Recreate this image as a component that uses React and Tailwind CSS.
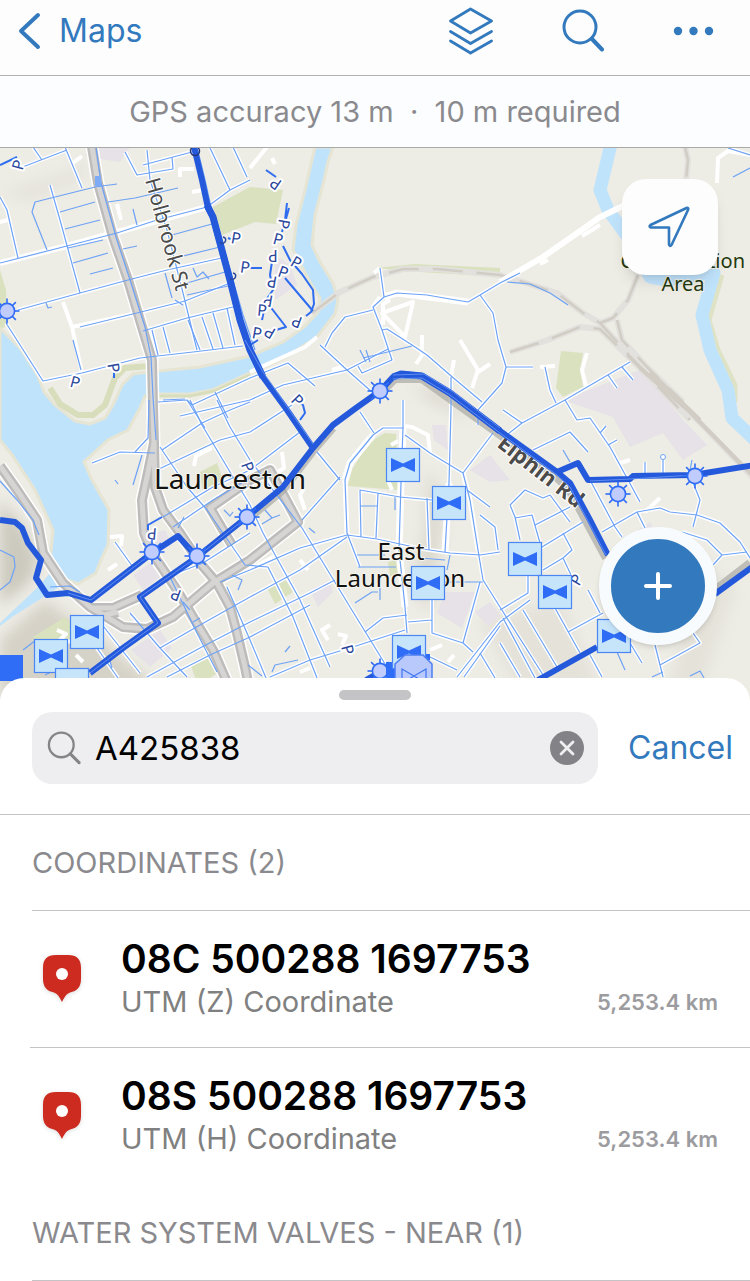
import { useState } from "react";

const water =
  "M0 328 L20 348 L38 376 L44 392 L55 405 L75 421 L90 424 L105 418 L113 405 L122 385 L133 374 L148 372 L200 367 L250 356 L283 342 L305 326 L318 312 L320 298 L311 284 L293 250 L296 225 L305 190 L315 147 L333 147 L328 162 L324 180 L315 215 L312 245 L320 262 L333 283 L338 300 L335 314 L317 337 L283 359 L250 373 L212 390 L190 394 L160 394 L145 396 L140 408 L128 430 L108 440 L84 462 L92 480 L109 510 L108 545 L100 562 L96 573 L78 584 L62 578 L50 562 L53 530 L35 490 L12 455 L0 440 Z";

const riverRight =
  "M612 140 L600 190 L608 210 L630 240 L650 277 L666 280 L700 274 L714 273 L702 315 L710 350 L728 390 L732 418 L755 440";

const parks = [
  "213,207 250,187 283,190 276,224 255,222 222,235",
  "561,351 583,353 580,370 583,387 563,397 556,388",
  "376,438 385,433 396,434 398,490 348,486 352,470 365,448",
  "267,588 285,579 293,592 275,604",
  "190,663 210,652 222,670 207,680 196,680",
  "200,472 217,463 223,480 203,493",
  "33,637 65,617 85,640 40,650",
  "376,268 415,264 500,268 500,277 420,272",
  "388,562 396,560 398,575 390,576",
];

const zones = [
  "563,400 640,370 667,400 683,420 707,445 683,460 663,433 630,447 613,417",
  "445,592 475,592 462,628 437,613",
  "133,575 150,563 160,577 143,590",
  "131,650 160,630 172,648 150,667",
  "150,535 165,530 172,545 158,552",
  "275,255 290,265 297,285 275,300",
  "470,470 490,455 510,480 490,482",
  "475,612 490,602 500,615 488,626",
  "432,425 446,425 448,450 434,440",
  "310,590 330,580 333,592 318,607",
  "90,147 130,147 120,162 95,158",
  "638,530 650,522 654,530 644,540",
];

const highways = [
  "M92 147 L98 183 L113 237 L128 280 L142 327 L152 360 L153 407 L154 443 L147 477 L142 500 L144 533 L152 553 L177 590 L193 617 L213 650 L227 682",
  "M154 443 L155 487 L163 510 L180 533 L200 563 L217 583 L230 607 L237 633 L245 667 L248 682",
  "M0 466 L17 490 L37 520 L43 553 L63 583 L90 607 L123 627 L147 629 L173 617 L213 583 L250 560 L298 522 L270 470 L250 480 L210 508 L232 545",
  "M93 608 L113 608 L142 595 M104 615 L118 612",
];

const rails = [
  "M312 313 L340 292 L373 277 L403 269 L437 269 L500 275 L523 282 L557 293 L583 313 L600 323 L627 353 L653 380 L687 410 L707 430 L755 480",
  "M510 352 L545 341 L580 327 L600 329 L640 368 L690 420",
  "M685 147 L688 160 L686 180 M638 275 L628 300 L613 318 L600 323 M617 320 L622 340 L647 367 L683 402",
];

const plainRoads = [
  "M500 282 L543 257 L600 217 L625 205 M540 264 L548 260 M582 236 L600 225",
  "M717 183 L718 158 L728 151 L750 155",
  "M382 313 L413 302 L405 337 Z M372 308 L380 297 M380 268 L374 273",
  "M460 340 L478 370 L472 388 M478 372 L490 364 M422 335 L422 355 L416 364 M454 360 L451 376",
  "M72 327 L137 313 M63 302 L72 327 L82 373",
  "M73 163 L82 156 M117 204 L121 220 M180 177 L180 169 L194 169 M192 192 L203 190",
  "M587 353 L582 370 L586 386 M540 367 L555 366",
  "M0 222 L8 220 M267 147 L250 168 M272 158 L275 164",
  "M317 337 L305 347 L250 372 M332 370 L345 366",
  "M430 453 L428 435 L412 427 L403 426 M391 445 L398 441",
  "M194 466 L196 456 L212 448 M110 537 L122 536 L121 546 M108 570 L117 564",
  "M390 300 L383 304 L383 325 M282 452 L284 468 L278 472",
  "M500 610 L528 593 M258 565 L275 556 M300 560 L308 570 M338 634 L346 636 L342 645",
  "M430 650 L442 645 M448 662 L454 655 M57 630 L66 634 L60 640 L72 642 M76 655 L83 662",
  "M330 625 L322 630 L328 640 M310 668 L300 672 M620 463 L630 460 M645 512 L660 498",
  "M392 490 L388 480 M305 510 L300 495 L304 488 M230 490 L222 500",
];

const pipedRoads = [
  "M0 263 L67 246 L117 233 L157 220 L207 207 L230 190 L250 180",
  "M18 310 L80 293 L128 280 L167 270 L222 258",
  "M80 327 L137 313 L185 301 L230 283",
  "M143 331 L187 318 L233 307",
  "M6 323 L43 381 L82 373 L140 358 L193 352 L243 346",
  "M50 185 L60 220 L80 293",
  "M0 197 L7 210 L18 258",
  "M147 150 L150 180 L167 230 L183 293 L197 350",
  "M152 330 L158 355 M163 327 L170 353 M188 320 L200 350 M202 317 L213 349 M213 313 L223 348 M227 308 L235 345",
  "M20 168 L67 150 M65 147 L82 188 M33 147 L42 160",
  "M210 148 L230 190 M233 147 L247 177",
  "M125 152 L137 175 L173 169 L172 157 M143 165 L192 152",
  "M158 402 L187 400 L192 405 L250 378 L288 363 L315 386",
  "M187 400 L205 428 M215 392 L228 418",
  "M180 416 L250 400 L283 385 L347 370 L388 349",
  "M320 345 L347 370 L372 392",
  "M325 347 L332 333 L345 317 L373 310",
  "M380 268 L384 297 L373 307 L382 330 L392 360 L362 373 L358 366",
  "M384 297 L397 293 L427 295 L450 299 L468 302 L480 295 L500 283 L520 273",
  "M480 295 L493 313 L498 340 L506 367 L502 383 L478 410 L478 425",
  "M382 330 L387 329 L412 345 L427 355 L450 375 L482 402",
  "M451 377 L451 410 L449 483 L445 552",
  "M506 367 L533 367 M545 367 L550 390 L556 403",
  "M503 438 L522 423 L565 400 L630 362",
  "M608 375 L617 388 M622 367 L633 380 M503 410 L522 423",
  "M92 463 L120 452 L155 453 M149 400 L148 438 L135 452",
  "M162 450 L202 423 L230 410 L250 402",
  "M190 400 L202 425 L233 477 L250 505 L263 533 L300 600 L330 667",
  "M217 400 L230 427 L250 460 L302 528 L350 607 L390 672",
  "M160 447 L187 487 L207 510 L245 565 L268 567 L293 617 L317 678",
  "M157 470 L220 440 L250 432 L292 405",
  "M163 517 L213 487 L250 470 L300 432",
  "M173 527 L213 500 L250 478",
  "M167 577 L203 563 L250 533",
  "M220 582 L250 570 L300 548 L347 535",
  "M160 648 L200 625 L250 597 L300 570 L347 537",
  "M147 677 L200 648 L250 622 L310 593 L335 580",
  "M167 677 L210 655 L250 637 L310 605",
  "M270 677 L310 660 L353 647 L405 630",
  "M170 577 L197 633 L217 672 M115 542 L135 570 M130 613 L160 648 L187 677 M100 622 L140 673 M90 638 L118 678",
  "M227 587 L250 640 L266 678",
  "M403 400 L403 428 L383 428 L373 435 L350 463 L345 480 L347 533 L360 567",
  "M302 520 L340 477 M317 452 L340 480 M360 412 L374 433",
  "M360 490 L400 497 L432 500 M360 490 L361 537 M378 493 L376 538 M427 498 L429 550",
  "M347 535 L377 539 L423 549 L450 553 L480 555 L500 552",
  "M403 428 L401 483 L399 550 L405 607 L407 633",
  "M405 435 L430 453 L463 473 L470 500 L478 550 L483 580 L500 607 L545 678",
  "M463 473 L493 433 M467 490 L490 507 M480 515 L495 527 L498 550",
  "M480 582 L463 643 M432 600 L432 633 L463 643 L473 652 M408 622 L432 620",
  "M500 622 L457 677 M500 626 L464 677",
  "M365 632 L383 618 L407 615 M428 656 L457 670 M480 653 L495 678",
  "M533 450 L570 432 L588 452 M565 400 L577 420 L590 418 L610 447 L627 478 L640 502",
  "M590 480 L615 527 L622 537 M602 532 L637 512 L660 508 L670 512 L697 515 L720 523 L740 542 L750 558",
  "M682 532 L707 540 L722 555 L747 552 M713 565 L722 555 M688 470 L700 500 L693 527 M637 512 L645 528",
  "M510 505 L525 490 L543 498 L550 495 L570 522 M510 505 L515 517 L520 540 M515 518 L532 515 L540 543",
  "M535 525 L570 507 M537 550 L583 522 M563 533 L572 550 L563 558 L543 570 M563 558 L572 577",
  "M500 610 L528 593 L528 575 M530 600 L500 622 M503 618 L535 678 M523 610 L557 667 M555 608 L580 653",
  "M568 632 L603 613 M588 590 L600 613 M590 655 L602 677 M630 643 L642 663",
  "M655 645 L663 677 M660 665 L700 643 L693 633 M500 643 L520 677",
  "M645 462 L645 475 M663 460 L663 475 M600 433 L606 426 M608 445 L617 440",
  "M728 148 L750 155",
];

const barePipes = [
  "M55 197 L95 187 L117 184 M60 212 L95 202 M65 229 L100 220 M68 248 L103 240 M73 263 L108 253 M90 274 L113 268",
  "M47 250 L32 212 L35 202 L55 197 M108 202 L135 198 L178 188 M133 209 L137 225 M123 249 L137 246",
  "M96 147 L101 183 L116 237 L130 280 L145 327 L151 357 L153 397 L156 440",
  "M172 235 L212 224 M175 258 L220 247 M187 283 L225 272 M187 295 L228 286 M165 273 L172 298 M175 300 L183 305",
  "M73 340 L81 370 M193 268 L197 277 L203 272 L209 279 M46 303 L48 308 L52 307",
  "M197 147 L205 180 L211 207 L217 225 L230 270 L243 315 L255 350",
  "M507 282 L530 284 L550 293 L568 305 M733 177 L750 168",
  "M363 358 L412 346 M360 350 L366 362 M366 350 L370 362",
  "M142 455 L133 485 M0 481 L17 500 L33 520 L39 535 M115 480 L118 484",
  "M163 400 L185 399 M184 517 L178 528 M224 510 L230 516 L233 512",
  "M232 575 L242 580 L238 590 M183 602 L190 610 M193 622 L200 618",
  "M265 510 L272 518 L262 524 M272 518 L280 515 M309 528 L315 533",
  "M360 506 L378 506 M395 497 L395 510 M357 555 L385 555 M358 567 L396 567 M380 585 L380 600 M355 603 L372 592 L378 592",
  "M443 582 L483 582 M445 560 L420 558 M450 555 L447 570",
  "M272 672 L275 665 L298 660 M248 665 L262 676 M285 652 L290 646",
  "M23 650 L36 640 L43 645 M45 675 L60 668 M108 655 L112 668",
  "M563 450 L570 462 M692 460 L690 470 M613 643 L625 670 M652 677 L663 672 M690 676 L700 671 L704 678",
  "M0 550 L14 557 L15 567 L10 582 L0 590 M50 587 L70 586 L80 592",
];

const serviceLines = [
  "M0 165 L17 157",
  "M276 177 L266 170",
  "M287 203 L285 220 L282 232 M289 208 L284 226",
  "M283 246 L290 260 L302 274 L313 290 L314 304 L311 312 L306 316",
  "M285 278 L313 311 M273 255 L270 275 L273 290 L266 300 L262 320",
  "M269 305 L286 327 L276 330 M258 340 L250 345",
  "M228 238 L236 241 M250 268 L262 268 M114 372 L114 378",
  "M148 530 L148 525 L162 517 M297 401 L303 405 L305 413 L300 420",
];

const mains = [
  "M194 147 L202 180 L208 208 L213 217 L220 243 L230 280 L240 320 L250 350 L263 377 L287 410 L313 448",
  "M380 391 L356 408 L333 425 L313 448 L283 487 L247 517 L197 557 L140 597 L158 623 L123 648 L90 673",
  "M380 391 L393 377 L401 374 L422 376 L450 393 L500 431 L557 472 L570 483 L590 520 L608 555",
  "M557 472 L578 463 L588 480 L630 479 L633 476 L693 475 L755 465",
  "M0 520 L15 522 L22 528 L28 543 L41 560 L36 578 L47 595 L68 593 L91 600 L152 553 L178 536 L197 557",
  "M715 594 L755 565",
  "M538 680 L597 647 M366 680 L380 672",
];

const mainHighlights = [
  "M247 517 L197 557 L140 597 L158 623 L123 648 L90 673",
  "M393 379 L422 378 L450 395 L500 433 L557 475 L570 487 L606 555",
  "M393 375 L424 374 L452 391 L500 428",
  "M68 593 L91 600 L152 553",
  "M245 340 L263 372 L313 444",
  "M590 481 L630 479 L693 475",
];

const parkingMarks = [
  [19, 165, -75], [75, 383, 15], [113, 368, 80], [236, 239, 10], [245, 268, 8],
  [276, 183, 215], [283, 224, 100], [278, 240, 15], [273, 255, 180], [296, 263, 30],
  [283, 273, 20], [272, 281, 190], [268, 300, 190], [262, 311, 5], [297, 321, 200],
  [270, 332, 210], [257, 334, 10], [297, 401, 45], [152, 533, 185], [176, 594, 200],
  [247, 467, 70], [347, 650, 75], [577, 580, -60],
];

const valves = [
  [403, 465], [449, 503], [428, 583], [525, 559], [555, 592],
  [614, 636], [87, 632], [51, 656], [409, 652], [72, 685],
];

const meters = [
  [380, 391], [247, 517], [197, 556], [152, 552], [618, 494], [695, 476], [7, 311], [380, 671],
];

const rays = [0, 45, 90, 135, 180, 225, 270, 315];

function Strokes({ paths, color, width, opacity }) {
  return (
    <g fill="none" stroke={color} strokeWidth={width} opacity={opacity} strokeLinejoin="round">
      {paths.map((d) => (
        <path key={d} d={d} />
      ))}
    </g>
  );
}

function Valve({ x, y }) {
  return (
    <g transform={`translate(${x} ${y})`}>
      <rect x="-16.500" y="-16.500" width="33" height="33" fill="#c6e5fb" stroke="#4b86f5" strokeWidth="1.200" />
      <path d="M-12 -7 L0 -1.500 L12 -7 V7 L0 1.500 L-12 7 Z" fill="#2f6df6" />
    </g>
  );
}

function Meter({ x, y }) {
  return (
    <g transform={`translate(${x} ${y})`} stroke="#2f6df6" strokeWidth="1.600">
      {rays.map((r) => (
        <path key={r} d="M0 -7 V-12.500" transform={`rotate(${r})`} />
      ))}
      <circle r="7.600" fill="#c0ccfd" />
    </g>
  );
}

function MapCanvas() {
  return (
    <svg
      className="block h-full w-full"
      viewBox="0 148 750 552"
      preserveAspectRatio="xMidYMid slice"
      role="img"
      aria-label="Map of Launceston"
    >
      <defs>
        <filter id="soft" x="-50%" y="-50%" width="200%" height="200%">
          <feGaussianBlur stdDeviation="7" />
        </filter>
      </defs>
      <rect y="140" width="750" height="570" fill="#edece5" />
      <g filter="url(#soft)">
        <path d="M0 500 L25 530 L38 560 L30 582 L0 605 Z" fill="#ccc9be" />
        <path d="M0 640 L45 600 L100 640 L150 680 L140 700 L0 700 Z" fill="#d5d2c7" />
        <path d="M428 470 L445 500 L432 610 L410 590 L425 530 Z" fill="#dddacf" />
        <path d="M412 385 L440 392 L470 420 L430 400 Z" fill="#d9d6cb" />
        <path d="M700 560 L735 590 L700 690 L670 690 Z" fill="#e4e2d9" />
        <path d="M0 192 L60 176 L90 160 L80 180 L30 200 Z" fill="#e4e2da" />
        <path d="M480 620 L560 600 L600 690 L520 690 Z" fill="#e4e2d9" />
      </g>
      {zones.map((p) => (
        <polygon key={p} points={p} fill="#e6e2e8" />
      ))}
      {parks.map((p) => (
        <polygon key={p} points={p} fill="#dae1be" />
      ))}
      <path d="M0 270 L6 290 L7 325 L0 330 Z" fill="#dae1be" />
      <path d={water} fill="#c0e3fc" stroke="#e6e5d4" strokeWidth="3" />
      <path d="M50 388 L60 404 L78 415 L93 415 L105 405 L115 378 L125 368 L150 366" fill="none" stroke="#d8debb" strokeWidth="6" />
      <path d="M145 396 L190 396 L214 391 L250 375" fill="none" stroke="#d8debb" strokeWidth="3" />
      <path d="M722 275 L709 320 L718 350 L735 385 V402" fill="none" stroke="#dfe3c6" strokeWidth="5" />
      <path d="M0 623 L40 585 L50 573 L62 585 L42 598 L12 617 L0 626 Z" fill="#c0e3fc" />
      <path d={riverRight} fill="none" stroke="#c0e3fc" strokeWidth="13" strokeLinejoin="round" />
      <Strokes paths={rails} color="#e2e1dd" width={6} />
      <g strokeDasharray="30 14">
        <Strokes paths={rails} color="#d1cdc5" width={2.5} />
      </g>
      <path d="M640 368 L690 412 L755 478 M650 372 L700 420" fill="none" stroke="#d1cdc5" strokeWidth="4" />
      <Strokes paths={pipedRoads} color="#ffffff" width={4} />
      <Strokes paths={plainRoads} color="#ffffff" width={4} />
      <path d="M500 282 L543 257 L600 217 L625 205 M0 263 L67 246 L207 207" fill="none" stroke="#fff" strokeWidth="6" />
      <path d="M403 428 L401 483 L399 550 L405 607 M449 483 L445 552 M373 435 L350 463 L345 480 M384 297 L397 293 L468 302" fill="none" stroke="#fff" strokeWidth="7" />
      <path d="M345 480 L347 533 M463 473 L470 500 L478 550" fill="none" stroke="#fff" strokeWidth="5" />
      <Strokes paths={highways} color="#ffffff" width={13} />
      <Strokes paths={highways} color="#bdbcba" width={10} />
      <Strokes paths={highways} color="#d6d5d3" width={5} />
      <path d="M380 394 L395 379 L422 379 L500 435 L555 476 L568 488 L606 558 M333 428 L313 451 L283 490 L247 520 M715 590 L750 563" fill="none" stroke="#aaa9a4" strokeWidth="8" opacity="0.7" />
      <Strokes paths={pipedRoads} color="#6da2f6" width={1.2} />
      <Strokes paths={barePipes} color="#6da2f6" width={1.2} />
      <rect x="95" y="176" width="6" height="10" fill="#7eabf6" />
      <circle cx="663" cy="457" r="2.500" fill="#fff" stroke="#6da2f6" />

      <g fontFamily="'Noto Sans', sans-serif">
        <text transform="translate(145 180) rotate(74.500)" fontSize="21" fill="#4b4b4b" stroke="#fff" strokeWidth="2" paintOrder="stroke">
          Holbrook St
        </text>
        <text transform="translate(496 446) rotate(38)" fontSize="22" fontWeight="700" fill="#4b4b4b" stroke="#fff" strokeWidth="2" paintOrder="stroke">
          Elphin Rd
        </text>
        <g fill="#111" stroke="#f6f5f0" strokeWidth="2" paintOrder="stroke" textAnchor="middle">
          <text x="230" y="489" fontSize="28">Launceston</text>
          <text x="401" y="560" fontSize="24">East</text>
          <text x="400" y="587" fontSize="24">Launceston</text>
        </g>
        <g fill="#23380f" stroke="#f0f0e6" strokeWidth="2" paintOrder="stroke">
          <text x="745" y="268" fontSize="20" textAnchor="end">Conservation</text>
          <text x="683" y="291" fontSize="20" textAnchor="middle">Area</text>
        </g>
      </g>

      <Strokes paths={serviceLines} color="#2f6df0" width={2} />
      <Strokes paths={mains} color="#2459dc" width={6} />
      <path d="M207 205 L213 217 L220 243 L230 280 L240 320 L250 350 L263 377" fill="none" stroke="#2459dc" strokeWidth="7" />
      <path d="M393 377 L401 374 L422 376 L450 393 L500 431" fill="none" stroke="#2459dc" strokeWidth="7" strokeLinejoin="round" />
      <Strokes paths={mainHighlights} color="#6f9cf5" width={1} opacity={0.8} />
      <circle cx="195" cy="151" r="4.500" fill="none" stroke="#25377a" strokeWidth="1.500" />
      <path d="M223 237 q4 1 2 5 q-3 3 -5 0 M233 273 q4 1 2 5 q-3 3 -5 0" fill="none" stroke="#2b479c" strokeWidth="1.500" />

      <g fontFamily="'Noto Sans', sans-serif" fontSize="16" fill="#2b479c" stroke="#fff" strokeWidth="4" strokeLinejoin="round" paintOrder="stroke" textAnchor="middle">
        {parkingMarks.map(([x, y, r]) => (
          <text key={`${x}-${y}`} transform={`translate(${x} ${y}) rotate(${r})`} y="5">
            P
          </text>
        ))}
      </g>

      <rect x="0" y="655" width="23" height="26" fill="#2f6df6" />
      {meters.map(([x, y]) => (
        <Meter key={`${x}-${y}`} x={x} y={y} />
      ))}
      <path d="M386 662 H396 V678 H386 Z M424 654 H430 V660 H424 Z" fill="#2f6df6" />
      {valves.map(([x, y]) => (
        <Valve key={`${x}-${y}`} x={x} y={y} />
      ))}
      <path d="M405 655 H423 L432 664 V684 H395 V664 Z" fill="#b9c9fb" stroke="#4b7df3" strokeWidth="1.500" />
      <path d="M402 669 V683 L426 669 V683 Z" fill="none" stroke="#3f76f3" strokeWidth="1.200" />
    </svg>
  );
}

function SearchGlyph({ className }) {
  return (
    <svg className={className} viewBox="0 0 44 44" fill="none" stroke="currentColor" strokeWidth="3" strokeLinecap="round" aria-hidden="true">
      <circle cx="18.500" cy="18" r="16" />
      <path d="M30.500 30 L41.500 41" strokeWidth="4" />
    </svg>
  );
}

function Pin() {
  return (
    <svg className="h-12 w-[38px] shrink-0 overflow-visible drop-shadow-sm" viewBox="0 0 38 48" aria-hidden="true">
      <path
        d="M13 0 H25 C34 0 38 4 38 13 V24 C38 32 34 36 27 37.500 C23 39 21 43 19 47 C17 43 15 39 11 37.500 C4 36 0 32 0 24 V13 C0 4 4 0 13 0 Z"
        fill="#cd2b1f"
      />
      <circle cx="19" cy="19" r="6" fill="#fff" />
    </svg>
  );
}

function SectionHeading({ children }) {
  return (
    <h2 className="ml-8 flex h-24 items-center border-b border-[#c4c4c6] text-[29px] leading-8 text-[#8a8a8e]">
      {children}
    </h2>
  );
}

const coordinates = [
  { title: "08C 500288 1697753", kind: "UTM (Z) Coordinate", distance: "5,253.4 km" },
  { title: "08S 500288 1697753", kind: "UTM (H) Coordinate", distance: "5,253.4 km" },
];

export default function App() {
  const [query, setQuery] = useState("A425838");

  return (
    <div className="flex flex-col bg-white font-['Inter',sans-serif] text-black">
      <header className="flex h-[76px] items-center justify-between border-b border-[#b0b0b2] bg-[#fdfdfd] pr-[35px] pb-3.5 pl-[17px] text-[#3279bd]">
        <a href="#maps" className="flex items-center gap-[18px] text-[32px] leading-10">
          <svg className="h-[38px] w-6" viewBox="0 0 24 38" fill="none" stroke="currentColor" strokeWidth="4" strokeLinecap="round" strokeLinejoin="round" aria-hidden="true">
            <path d="M21 3 L4 19 L21 35" />
          </svg>
          Maps
        </a>
        <div className="flex items-center gap-[67px]">
          <button type="button" aria-label="Layers">
            <svg className="h-12 w-11" viewBox="0 0 44 48" fill="none" stroke="currentColor" strokeWidth="2.800" strokeLinecap="round" strokeLinejoin="round" aria-hidden="true">
              <path d="M21.500 2 L42.500 14 L21.500 26 L1.500 14 Z M1.500 24.500 L21.500 36.500 L42.500 24.500 M1.500 34 L21.500 46 L42.500 34" />
            </svg>
          </button>
          <button type="button" aria-label="Search">
            <svg className="size-11" viewBox="0 0 44 44" fill="none" stroke="currentColor" strokeWidth="3" strokeLinecap="round" aria-hidden="true">
              <circle cx="20" cy="18" r="16" />
              <path d="M32 30 L42 40.500" strokeWidth="4" />
            </svg>
          </button>
          <button type="button" aria-label="More">
            <svg className="size-11" viewBox="0 0 44 44" fill="currentColor" aria-hidden="true">
              <circle cx="7" cy="22" r="4.200" />
              <circle cx="22.500" cy="22" r="4.200" />
              <circle cx="38" cy="22" r="4.200" />
            </svg>
          </button>
        </div>
      </header>

      <p className="flex h-[72px] items-center justify-center border-b border-[#a9a9a9] bg-[#fcfdfe] text-[29px] leading-9 whitespace-pre text-[#8a8a8e]">
        GPS accuracy 13 m  ·  10 m required
      </p>

      <main className="relative h-[552px] overflow-hidden">
        <MapCanvas />
        <button type="button" aria-label="My location" className="absolute top-[31px] right-8 flex size-24 items-center justify-center rounded-3xl bg-[#fcfdfc] text-[#3279bd] shadow-lg">
          <svg className="size-11" viewBox="0 0 44 44" fill="none" stroke="currentColor" strokeWidth="2.600" strokeLinejoin="round" aria-hidden="true">
            <path d="M38.500 3 Q41 2.500 40 5 L23.500 40 Q22 42 21 39.500 V22.500 H3 Q0.500 21.500 2.500 20 Z" />
          </svg>
        </button>
        <button type="button" aria-label="Add" className="absolute right-[33px] bottom-[55px] flex size-[118px] items-center justify-center rounded-full border-12 border-[#f8fbfe] bg-[#3279bd] text-white shadow-md">
          <svg className="size-7" viewBox="0 0 28 28" fill="none" stroke="currentColor" strokeWidth="4" strokeLinecap="round" aria-hidden="true">
            <path d="M14 2 V26 M2 14 H26" />
          </svg>
        </button>
      </main>

      <section className="relative -mt-[22px] rounded-t-3xl bg-white" aria-label="Search results">
        <div className="flex justify-center pt-3 pb-3">
          <span className="h-2.5 w-[72px] rounded-full bg-[#c4c4c6]" />
        </div>
        <form className="flex items-center gap-[30px] border-b border-[#c4c4c6] pr-[17px] pb-[30px] pl-8" onSubmit={(e) => e.preventDefault()}>
          <div className="flex h-[72px] min-w-0 flex-1 items-center gap-3.5 rounded-[20px] bg-[#eeeef0] pr-3.5 pl-[15px]">
            <SearchGlyph className="size-[34px] shrink-0 text-[#858589]" />
            <input
              type="text"
              aria-label="Search map"
              value={query}
              onChange={(e) => setQuery(e.target.value)}
              className="min-w-0 flex-1 bg-transparent text-[33px] leading-10 outline-none"
            />
            <button type="button" aria-label="Clear" onClick={() => setQuery("")}>
              <svg className="size-[34px]" viewBox="0 0 34 34" aria-hidden="true">
                <circle cx="17" cy="17" r="17" fill="#838387" />
                <path d="M11 11 L23 23 M23 11 L11 23" stroke="#f0f0f2" strokeWidth="2.800" strokeLinecap="round" />
              </svg>
            </button>
          </div>
          <button type="button" className="text-[32px] leading-10 text-[#3279bd]">
            Cancel
          </button>
        </form>

        <SectionHeading>COORDINATES (2)</SectionHeading>
        <ul>
          {coordinates.map((c) => (
            <li key={c.title} className="ml-[30px] flex h-[137px] border-b border-[#c4c4c6] pt-[26px] pr-8 pl-[13px] last:border-transparent">
              <div className="pt-[18px]">
                <Pin />
              </div>
              <div className="ml-10 flex-1">
                <h3 className="text-[39px] leading-11 font-semibold whitespace-nowrap">{c.title}</h3>
                <div className="flex items-center justify-between leading-[42px]">
                  <span className="text-[29px] text-[#808080]">{c.kind}</span>
                  <span className="text-[22px] font-semibold text-[#9c9ca0]">{c.distance}</span>
                </div>
              </div>
            </li>
          ))}
        </ul>
        <SectionHeading>WATER SYSTEM VALVES - NEAR (1)</SectionHeading>
      </section>
    </div>
  );
}
